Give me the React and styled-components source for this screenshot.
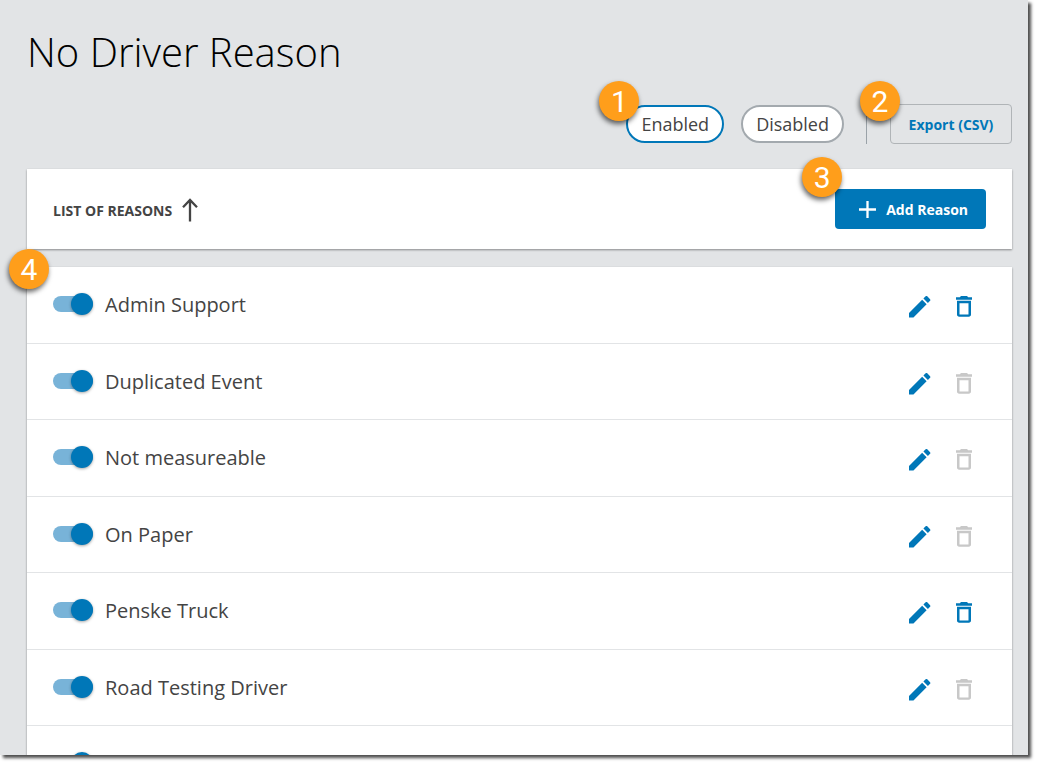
import React, { useState } from 'react'
import styled, { createGlobalStyle } from 'styled-components'

const initialReasons = [
  { id: 1, name: 'Admin Support', enabled: true, removable: true },
  { id: 2, name: 'Duplicated Event', enabled: true, removable: false },
  { id: 3, name: 'Not measureable', enabled: true, removable: false },
  { id: 4, name: 'On Paper', enabled: true, removable: false },
  { id: 5, name: 'Penske Truck', enabled: true, removable: true },
  { id: 6, name: 'Road Testing Driver', enabled: true, removable: false },
  { id: 7, name: '', enabled: true, removable: false },
]

function PencilIcon() {
  return (
    <svg width="22" height="22" viewBox="3 3 18.5 18.5" fill="currentColor" aria-hidden="true">
      <path d="M3 17.25V21h3.75L17.81 9.94l-3.75-3.75L3 17.25zM20.71 7.04c.39-.39.39-1.02 0-1.41l-2.34-2.34a.996.996 0 0 0-1.41 0l-1.83 1.83 3.75 3.75 1.83-1.83z" />
    </svg>
  )
}

function TrashIcon() {
  return (
    <svg width="16" height="22" viewBox="0 0 16 22" fill="currentColor" aria-hidden="true">
      <path d="M0 1.2h3.8L5 0h6l1.2 1.2H16v2.6H0z" />
      <path
        fillRule="evenodd"
        d="M1 4.8h14v13.8c0 1.3-.9 2.2-2.2 2.2H3.2C1.9 20.8 1 19.900 1 18.600zM3.500 7.200v11.200h9V7.200z"
      />
    </svg>
  )
}

function App() {
  const [filter, setFilter] = useState('enabled')
  const [reasons, setReasons] = useState(initialReasons)

  const toggle = (id) => {
    setReasons(reasons.map((r) => (r.id === id ? { ...r, enabled: !r.enabled } : r)))
  }

  return (
    <Shell>
      <GlobalStyle />
      <Page>
        <Title>No Driver Reason</Title>
        <Toolbar>
          <Anchor>
            <Pill
              type="button"
              $active={filter === 'enabled'}
              aria-pressed={filter === 'enabled'}
              onClick={() => setFilter('enabled')}
            >
              Enabled
            </Pill>
            <Marker $top={-24} $left={-27}>1</Marker>
          </Anchor>
          <Pill
            type="button"
            $active={filter === 'disabled'}
            aria-pressed={filter === 'disabled'}
            onClick={() => setFilter('disabled')}
          >
            Disabled
          </Pill>
          <Divider />
          <Anchor>
            <ExportButton type="button">Export (CSV)</ExportButton>
            <Marker $top={-23} $left={-30}>2</Marker>
          </Anchor>
        </Toolbar>

        <HeaderCard>
          <SortButton type="button">
            LIST OF REASONS
            <svg width="16" height="24" viewBox="0 0 16 24" fill="none" stroke="currentColor" strokeWidth="2.3" aria-hidden="true">
              <path d="M8 23.5V2.5M1 9.2l7-7.2 7 7.2" />
            </svg>
          </SortButton>
          <Anchor>
            <AddButton type="button">
              <svg width="17" height="17" viewBox="0 0 17 17" stroke="currentColor" strokeWidth="2.3" aria-hidden="true">
                <path d="M8.5 0v17M0 8.5h17" />
              </svg>
              Add Reason
            </AddButton>
            <Marker $top={-32} $left={-33}>3</Marker>
          </Anchor>
        </HeaderCard>

        <Card>
          <Marker $top={-18} $left={-18}>4</Marker>
          <ReasonList>
            {reasons.map((reason) => (
              <ReasonRow key={reason.id}>
                <ReasonLabel>
                  <Switch
                    type="checkbox"
                    aria-label={reason.name || 'Untitled reason'}
                    checked={reason.enabled}
                    onChange={() => toggle(reason.id)}
                  />
                  {reason.name}
                </ReasonLabel>
                <IconButton type="button" aria-label="Edit">
                  <PencilIcon />
                </IconButton>
                <IconButton type="button" aria-label="Delete" disabled={!reason.removable}>
                  <TrashIcon />
                </IconButton>
              </ReasonRow>
            ))}
          </ReasonList>
        </Card>
      </Page>
    </Shell>
  )
}

export default App

const GlobalStyle = createGlobalStyle`
  * {
    box-sizing: border-box;
  }

  body {
    margin: 0;
    background: #fff;
    color: #444;
    font-family: 'Open Sans', 'Noto Sans', sans-serif;
  }

  button {
    margin: 0;
    font-family: inherit;
    cursor: pointer;
  }
`

const Shell = styled.div`
  height: 100vh;
  padding: 0 10px 10px 0;
  overflow: hidden;
`

const Page = styled.main`
  height: 100%;
  padding: 24px 16px 0 27px;
  overflow: hidden;
  background: #e2e4e6;
  box-shadow: 3px 3px 3px rgba(0, 0, 0, 0.7);
`

const Title = styled.h1`
  margin: 0;
  color: #000;
  font-size: 40px;
  font-weight: 300;
  line-height: 56px;
`

const Toolbar = styled.div`
  display: flex;
  align-items: center;
  justify-content: flex-end;
  gap: 17px;
  margin: 24px 0 25px;
`

const Anchor = styled.div`
  position: relative;
  display: flex;
`

const Marker = styled.span`
  position: absolute;
  top: ${(props) => props.$top}px;
  left: ${(props) => props.$left}px;
  z-index: 1;
  width: 40px;
  height: 40px;
  border-radius: 50%;
  background: #ff9e1b;
  box-shadow: -1px 3px 5px rgba(0, 0, 0, 0.6);
  color: #fff;
  font-family: Roboto, 'Liberation Sans', sans-serif;
  font-size: 30px;
  line-height: 42px;
  text-align: center;
`

const Pill = styled.button`
  height: 38px;
  padding: 0 13px;
  border: 2px solid ${(props) => (props.$active ? '#0077b8' : '#a3a9ae')};
  border-radius: 19px;
  background: #fff;
  color: #444;
  font-size: 18px;
`

const Divider = styled.div`
  width: 1px;
  height: 40px;
  margin: 0 6px 0 5px;
  background: #9aa2a8;
`

const ExportButton = styled.button`
  min-width: 122px;
  height: 40px;
  padding: 0 16px;
  border: 1px solid #b0b4b7;
  border-radius: 4px;
  background: transparent;
  color: #0077b8;
  font-size: 14px;
  font-weight: 700;
`

const Card = styled.section`
  position: relative;
  background: #fff;
  box-shadow: 0 1px 2px rgba(0, 0, 0, 0.4);
`

const HeaderCard = styled(Card)`
  display: flex;
  align-items: center;
  justify-content: space-between;
  height: 80px;
  margin-bottom: 18px;
  padding: 0 26px;
`

const SortButton = styled.button`
  display: flex;
  align-items: center;
  gap: 10px;
  padding: 2px 0 0;
  border: none;
  background: none;
  color: #444;
  font-size: 14px;
  font-weight: 700;
`

const AddButton = styled.button`
  display: flex;
  align-items: center;
  gap: 10px;
  height: 40px;
  padding: 0 18px 0 24px;
  border: none;
  border-radius: 4px;
  background: #0077b8;
  color: #fff;
  font-size: 14px;
  font-weight: 700;
`

const ReasonList = styled.ul`
  display: grid;
  grid-auto-rows: 77px 76px;
  margin: 0;
  padding: 0;
  list-style: none;
`

const ReasonRow = styled.li`
  display: flex;
  align-items: center;
  gap: 12px;
  padding: 0 32px 0 26px;
  border-bottom: 1px solid #e2e4e6;
`

const ReasonLabel = styled.label`
  display: flex;
  flex: 1;
  align-items: center;
  gap: 12px;
  font-size: 20px;
  line-height: 28px;
`

const Switch = styled.input`
  appearance: none;
  position: relative;
  width: 40px;
  height: 16px;
  margin: 0 0 2px;
  border-radius: 8px;
  background: ${(props) => (props.checked ? '#78b3d8' : '#b5b9bc')};
  cursor: pointer;

  &::before {
    content: '';
    position: absolute;
    top: -3px;
    left: ${(props) => (props.checked ? '18px' : '0')};
    width: 22px;
    height: 22px;
    border-radius: 50%;
    background: ${(props) => (props.checked ? '#0077b8' : '#fff')};
    box-shadow: 0 1px 3px rgba(0, 0, 0, 0.35);
  }
`

const IconButton = styled.button`
  display: flex;
  align-items: center;
  justify-content: center;
  width: 32px;
  height: 32px;
  margin-top: 4px;
  padding: 0;
  border: none;
  background: none;
  color: #0077b8;

  &:disabled {
    color: #c8c8c8;
    cursor: default;
  }
`
